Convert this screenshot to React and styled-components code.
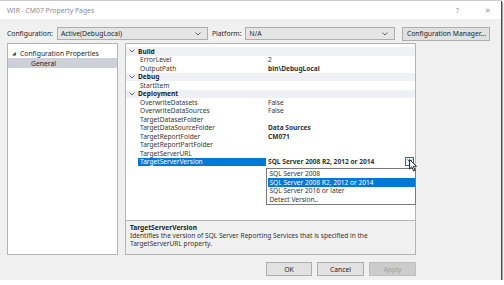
import React from 'react';
import styled, { createGlobalStyle } from 'styled-components';

const GlobalStyle = createGlobalStyle`
  body {
    margin: 0;
    background: #ffffff;
    font-family: 'Noto Sans', 'Liberation Sans', sans-serif;
  }
`;

const categories = [
  {
    name: 'Build',
    rows: [
      { name: 'ErrorLevel', value: '2' },
      { name: 'OutputPath', value: 'bin\\DebugLocal', bold: true },
    ],
  },
  { name: 'Debug', rows: [{ name: 'StartItem', value: '' }] },
  {
    name: 'Deployment',
    rows: [
      { name: 'OverwriteDatasets', value: 'False' },
      { name: 'OverwriteDataSources', value: 'False' },
      { name: 'TargetDatasetFolder', value: '' },
      { name: 'TargetDataSourceFolder', value: 'Data Sources', bold: true },
      { name: 'TargetReportFolder', value: 'CM071', bold: true },
      { name: 'TargetReportPartFolder', value: '' },
      { name: 'TargetServerURL', value: '' },
      {
        name: 'TargetServerVersion',
        value: 'SQL Server 2008 R2, 2012 or 2014',
        bold: true,
        selected: true,
      },
    ],
  },
];

const options = [
  'SQL Server 2008',
  'SQL Server 2008 R2, 2012 or 2014',
  'SQL Server 2016 or later',
  'Detect Version..',
];

const Chevron = () => (
  <svg width="6" height="4" viewBox="0 0 6 4">
    <path d="M0.5 0.5 L3 3 L5.5 0.5" fill="none" stroke="#555" strokeWidth="0.9" />
  </svg>
);

const Cursor = () => (
  <svg width="9" height="13" viewBox="0 0 9 13">
    <path d="M0.5 0.5 L0.5 10 L2.8 7.8 L4.6 12 L6 11.3 L4.3 7.3 L7.5 7.3 Z" fill="#fff" stroke="#000" strokeWidth="0.8" />
  </svg>
);

export default function App() {
  return (
    <>
      <GlobalStyle />
      <Window>
        <TitleBar>
          <span>WIR - CM07 Property Pages</span>
          <TitleButtons>
            <span>?</span>
            <span>✕</span>
          </TitleButtons>
        </TitleBar>

        <ConfigRow>
          <Label>Configuration:</Label>
          <Combo $width={151}>
            <span>Active(DebugLocal)</span>
            <Chevron />
          </Combo>
          <Label $ml={4}>Platform:</Label>
          <Combo $width={150}>
            <span>N/A</span>
            <Chevron />
          </Combo>
          <Button $width={88} $ml={7}>Configuration Manager...</Button>
        </ConfigRow>

        <Body>
          <Tree>
            <TreeItem>
              <Expander>◢</Expander>
              Configuration Properties
            </TreeItem>
            <TreeItem $selected $indent={23}>General</TreeItem>
          </Tree>

          <PropertyBox>
            <Grid>
              {categories.map((cat) => (
                <React.Fragment key={cat.name}>
                  <CategoryRow>
                    <Gutter>
                      <Chevron />
                    </Gutter>
                    <span>{cat.name}</span>
                  </CategoryRow>
                  {cat.rows.map((row) => (
                    <PropRow key={row.name}>
                      <Gutter />
                      <PropName $selected={row.selected}>{row.name}</PropName>
                      <PropValue $bold={row.bold}>
                        {row.value}
                        {row.selected && (
                          <DropButton>
                            <Chevron />
                          </DropButton>
                        )}
                      </PropValue>
                    </PropRow>
                  ))}
                </React.Fragment>
              ))}
              <DropList>
                {options.map((opt, i) => (
                  <DropItem key={opt} $selected={i === 1}>{opt}</DropItem>
                ))}
              </DropList>
              <CursorWrap>
                <Cursor />
              </CursorWrap>
            </Grid>
            <Description>
              <DescTitle>TargetServerVersion</DescTitle>
              <div>Identifies the version of SQL Server Reporting Services that is specified in the</div>
              <div>TargetServerURL property.</div>
            </Description>
          </PropertyBox>
        </Body>

        <Footer>
          <Button $width={46}>OK</Button>
          <Button $width={47} $ml={5}>Cancel</Button>
          <Button $width={47} $ml={5} $disabled>Apply</Button>
        </Footer>
      </Window>
    </>
  );
}

const Window = styled.div`
  width: 501px;
  height: 280px;
  box-sizing: border-box;
  background: #f0f0f0;
  border-top: 1px solid #c8c8c8;
  box-shadow: 1px 1px 0 #4a4a4a, 2px 2px 1px rgba(0, 0, 0, 0.35);
  display: flex;
  flex-direction: column;
  font-size: 6.6px;
  color: #1e1e1e;
`;

const TitleBar = styled.div`
  height: 18px;
  background: #ffffff;
  display: flex;
  align-items: center;
  justify-content: space-between;
  padding: 0 7px;
  color: #8c8c8c;
  font-size: 6.8px;
`;

const TitleButtons = styled.div`
  display: flex;
  gap: 26px;
  padding-right: 3px;
  color: #9a9a9a;
`;

const ConfigRow = styled.div`
  display: flex;
  align-items: center;
  height: 13px;
  margin-top: 8px;
  padding: 0 7px;
`;

const Label = styled.span`
  margin-left: ${(p) => p.$ml || 0}px;
  margin-right: 4px;
  font-size: 6.8px;
`;

const Combo = styled.div`
  width: ${(p) => p.$width}px;
  height: 13px;
  box-sizing: border-box;
  border: 1px solid #adadad;
  background: #e5e5e5;
  display: flex;
  align-items: center;
  justify-content: space-between;
  padding: 0 6px 0 3px;
  font-size: 6.8px;
`;

const Button = styled.div`
  width: ${(p) => p.$width}px;
  margin-left: ${(p) => p.$ml || 0}px;
  height: 14px;
  box-sizing: border-box;
  border: 1px solid ${(p) => (p.$disabled ? '#bfbfbf' : '#adadad')};
  background: ${(p) => (p.$disabled ? '#cccccc' : '#e1e1e1')};
  color: ${(p) => (p.$disabled ? '#a0a0a0' : '#1e1e1e')};
  display: flex;
  align-items: center;
  justify-content: center;
  font-size: 6.8px;
  white-space: nowrap;
`;

const Body = styled.div`
  display: flex;
  height: 212px;
  margin-top: 3px;
  padding: 0 85px 0 7px;
  gap: 7px;
`;

const Tree = styled.div`
  width: 111px;
  box-sizing: border-box;
  background: #ffffff;
  border: 1px solid #b4b4b4;
  padding-top: 4px;
`;

const TreeItem = styled.div`
  height: 10px;
  display: flex;
  align-items: center;
  padding-left: ${(p) => p.$indent || 4}px;
  background: ${(p) => (p.$selected ? '#cdd0d8' : 'transparent')};
  font-size: 6.8px;
`;

const Expander = styled.span`
  font-size: 5px;
  margin-right: 4px;
  color: #444;
`;

const PropertyBox = styled.div`
  width: 291px;
  box-sizing: border-box;
  border: 1px solid #b4b4b4;
  display: flex;
  flex-direction: column;
`;

const Grid = styled.div`
  position: relative;
  flex: 1;
  background: #ffffff;
  padding-top: 3px;
  border-bottom: 1px solid #b4b4b4;
`;

const CategoryRow = styled.div`
  height: 8.5px;
  display: flex;
  align-items: center;
  background: #eef0f4;
  font-weight: bold;
`;

const PropRow = styled.div`
  height: 8.5px;
  display: flex;
  align-items: center;
`;

const Gutter = styled.div`
  width: 12px;
  flex: none;
  display: flex;
  justify-content: center;
  align-items: center;
`;

const PropName = styled.div`
  width: 128px;
  height: 100%;
  display: flex;
  align-items: center;
  padding-left: 2px;
  box-sizing: border-box;
  background: ${(p) => (p.$selected ? '#0078d7' : 'transparent')};
  color: ${(p) => (p.$selected ? '#ffffff' : '#333333')};
`;

const PropValue = styled.div`
  position: relative;
  flex: 1;
  height: 100%;
  display: flex;
  align-items: center;
  padding-left: 2px;
  font-weight: ${(p) => (p.$bold ? 'bold' : 'normal')};
  color: #333333;
`;

const DropButton = styled.div`
  position: absolute;
  right: 1px;
  top: -1px;
  width: 9px;
  height: 9px;
  box-sizing: border-box;
  border: 1px solid #0078d7;
  background: #e5f1fb;
  display: flex;
  align-items: center;
  justify-content: center;
`;

const DropList = styled.div`
  position: absolute;
  left: 140px;
  top: 124px;
  width: 150px;
  box-sizing: border-box;
  border: 1px solid #7a7a7a;
  background: #ffffff;
  padding: 0.5px;
`;

const DropItem = styled.div`
  height: 8.5px;
  display: flex;
  align-items: center;
  padding-left: 2px;
  background: ${(p) => (p.$selected ? '#0078d7' : 'transparent')};
  color: ${(p) => (p.$selected ? '#ffffff' : '#333333')};
`;

const CursorWrap = styled.div`
  position: absolute;
  left: 283px;
  top: 115px;
`;

const Description = styled.div`
  height: 30px;
  padding: 3px 4px 0;
  line-height: 8.2px;
  color: #333333;
`;

const DescTitle = styled.div`
  font-weight: bold;
  color: #1e1e1e;
`;

const Footer = styled.div`
  display: flex;
  justify-content: flex-end;
  padding-right: 85px;
  margin-top: 7px;
`;
